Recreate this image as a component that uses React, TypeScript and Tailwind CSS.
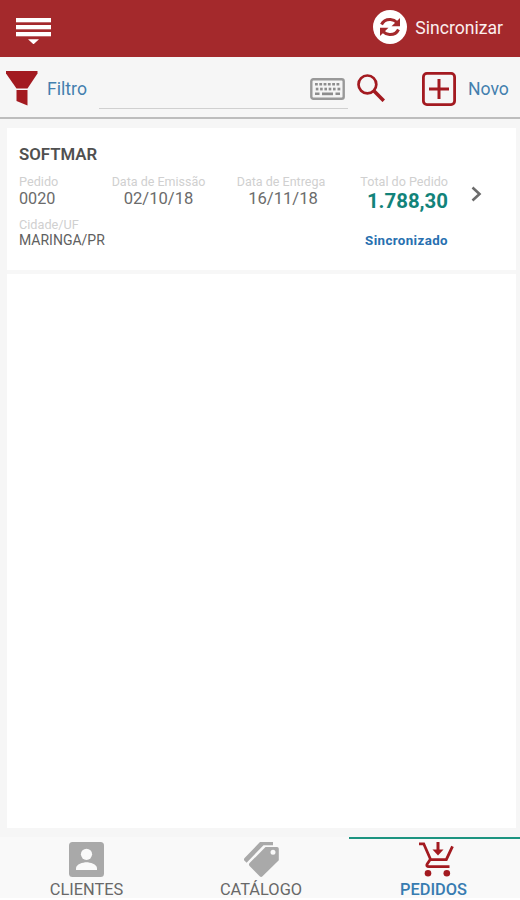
import React from 'react';

type Order = {
    id: string;
    customer: string;
    issueDate: string;
    deliveryDate: string;
    total: string;
    city: string;
    status: string;
};

const orders: Order[] = [
    {
        id: '0020',
        customer: 'SOFTMAR',
        issueDate: '02/10/18',
        deliveryDate: '16/11/18',
        total: '1.788,30',
        city: 'MARINGA/PR',
        status: 'Sincronizado',
    },
];

function MenuIcon() {
    return (
        <svg className="h-[28px] w-[36px] shrink-0" viewBox="0 0 36 28" fill="#fff">
            <rect x="1" y="2" width="35" height="4.300" />
            <rect x="1" y="9" width="35" height="4.300" />
            <rect x="1" y="16" width="35" height="4.300" />
            <path d="M13 23.300h11l-5.500 5z" />
        </svg>
    );
}

function SyncIcon() {
    return (
        <svg className="h-[34px] w-[34px] shrink-0" viewBox="0 0 34 34">
            <circle cx="17" cy="17" r="17" fill="#fff" />
            <g fill="none" stroke="#a4292c" strokeWidth="3">
                <path d="M8.500 14.500C10.300 10.700 13.500 9.200 17.500 9.400c3 .2 4.800 1.300 6.500 3.100" />
                <path d="M25.500 19.500C23.700 23.300 20.500 24.800 16.500 24.600c-3-.2-4.800-1.300-6.500-3.100" />
            </g>
            <path d="M27 8v8.300h-8.500z" fill="#a4292c" />
            <path d="M7 26v-8.300h8.500z" fill="#a4292c" />
        </svg>
    );
}

function FilterIcon() {
    return (
        <svg className="h-[35px] w-[32px] shrink-0" viewBox="0 0 32 35" fill="#a31a20">
            <path d="M0 0h31.500v2.500L21.500 17.500H10.500L0 2.500z" />
            <path d="M10.500 19h11v15.500l-11-4.500z" />
        </svg>
    );
}

function KeyboardIcon() {
    const keys = [5, 9.3, 13.6, 17.9, 22.2, 26.5];
    return (
        <svg className="h-[22px] w-[35px] shrink-0" viewBox="0 0 35 22">
            <rect x="1.300" y="1.300" width="32.400" height="19.400" rx="2" fill="#f5f5f5" stroke="#999" strokeWidth="2.400" />
            <g fill="#8d8d8d">
                {keys.map((x) => (
                    <rect key={x} x={x} y="5" width="2.800" height="2.500" />
                ))}
                {keys.slice(0, 5).map((x) => (
                    <rect key={x} x={x + 0.8} y="9.700" width="2.600" height="2.700" />
                ))}
                <rect x="27.500" y="9.700" width="2.800" height="2.700" />
                <rect x="5" y="14.500" width="4.500" height="2.500" />
                <rect x="12" y="14.500" width="11" height="2.700" />
                <rect x="25.500" y="14.500" width="4.500" height="2.500" />
            </g>
        </svg>
    );
}

function SearchIcon() {
    return (
        <svg className="h-[28px] w-[28px] shrink-0" viewBox="0 0 28 28" fill="none" stroke="#a31a20">
            <circle cx="10.400" cy="10.400" r="8.900" strokeWidth="2.700" />
            <path d="M16.800 16.800l10 10" strokeWidth="3.600" />
        </svg>
    );
}

function AddIcon() {
    return (
        <svg className="h-[34px] w-[34px] shrink-0" viewBox="0 0 34 34" fill="none" stroke="#a31a20">
            <rect x="1.400" y="1.400" width="31.200" height="31.200" rx="3.500" strokeWidth="2.800" />
            <path d="M17 7v20M7 17h20" strokeWidth="3" />
        </svg>
    );
}

function ClientsIcon() {
    return (
        <svg className="h-[35px] w-[35px] shrink-0" viewBox="0 0 35 35">
            <rect width="35" height="35" rx="3.500" fill="#a9a9a9" />
            <circle cx="17.500" cy="12.300" r="5.600" fill="#fafafa" />
            <path d="M7 28v-1.800c0-4 7-6 10.500-6S28 22.200 28 26.200V28z" fill="#fafafa" />
        </svg>
    );
}

function CatalogIcon() {
    return (
        <svg className="h-[35px] w-[35px] shrink-0" viewBox="0 0 35 35" fill="#a9a9a9">
            <path d="M16 0h13v3.200h-9.500L2.600 20.800 .6 18.800a2 2 0 0 1 0-2.800z" />
            <path
                fillRule="evenodd"
                d="M21.500 5H33a1.800 1.800 0 0 1 1.800 1.800v11.400L18.500 34.200a2 2 0 0 1-2.800 0L5.600 23.900a2 2 0 0 1 0-2.800zM29 7.800a2.500 2.500 0 1 0 0 5 2.500 2.500 0 1 0 0-5z"
            />
        </svg>
    );
}

function OrdersIcon() {
    return (
        <svg className="ml-[3px] h-[35px] w-[35px] shrink-0" viewBox="0 0 35 35">
            <g fill="none" stroke="#a31a20" strokeWidth="2.800">
                <path d="M0 1.800h4.700l7 15.900h15.600L33.500 4.400" />
                <path d="M11.200 17.500l-3 4.400c-1 1.600-.2 2.700 1.800 2.700h20.500" />
                <path d="M19 0v9" strokeWidth="3" />
            </g>
            <g fill="#a31a20">
                <path d="M13.500 7.500h11L19 13.500z" />
                <circle cx="9" cy="31.300" r="3.300" />
                <circle cx="27.800" cy="31.300" r="3.300" />
            </g>
        </svg>
    );
}

function OrderRow({ order }: { order: Order }) {
    return (
        <li className="flex h-[146px] border-b-4 border-[#f7f7f7] pl-[12px] pt-[16px]">
            <div className="w-[429px]">
                <h2 className="h-[31px] text-[16.8px] leading-[20px] font-semibold text-[#505050]">{order.customer}</h2>
                <div className="flex h-[43px] text-[16.6px] leading-[21px] whitespace-nowrap text-[#6b6b6b]">
                    <div className="w-[92px]">
                        <p className="text-[12.7px] leading-[13px] text-[#d0d0d0]">Pedido</p>
                        <p className="text-[16.2px]">{order.id}</p>
                    </div>
                    <div className="w-[95px] text-center">
                        <p className="text-[12.5px] leading-[13px] text-[#d0d0d0]">Data de Emissão</p>
                        <p>{order.issueDate}</p>
                    </div>
                    <div className="ml-[29px] w-[92px] text-center">
                        <p className="text-[12.5px] leading-[13px] text-[#d0d0d0]">Data de Entrega</p>
                        <p className="pl-[4px]">{order.deliveryDate}</p>
                    </div>
                    <div className="ml-auto w-[90px] text-right">
                        <p className="text-[12.6px] leading-[13px] text-[#d0d0d0]">Total do Pedido</p>
                        <p className="text-[20.4px] leading-[26px] font-bold text-[#12837a]">{order.total}</p>
                    </div>
                </div>
                <div className="flex items-end justify-between leading-[18px]">
                    <div>
                        <p className="text-[12.7px] leading-[13px] text-[#d0d0d0]">Cidade/UF</p>
                        <p className="text-[14px] text-[#606060]">{order.city}</p>
                    </div>
                    <p className="text-[13.3px] leading-[17px] font-bold tracking-[0.4px] text-[#2770b0]">{order.status}</p>
                </div>
            </div>
            <svg
                className="mt-[42px] ml-[23px] h-[16px] w-[12px]"
                viewBox="0 0 12 16"
                fill="none"
                stroke="#6c6c6c"
                strokeWidth="2.600"
            >
                <path d="M1.500 1.500L8.500 8l-7 6.500" />
            </svg>
        </li>
    );
}

function App() {
    return (
        <div className="flex h-[900px] w-[520px] flex-col bg-[#f6f6f6] font-[Roboto,sans-serif]">
            <header className="flex h-[57px] shrink-0 items-start justify-between bg-[#a4292c] pr-[17px] pl-[15px]">
                <button className="mt-[16px]">
                    <MenuIcon />
                </button>
                <button className="mt-[10px] flex items-center gap-[8px] text-[17.6px] text-[#fbeeee]">
                    <SyncIcon />
                    <span className="pt-[2px]">Sincronizar</span>
                </button>
            </header>

            <div className="flex h-[62px] shrink-0 border-b-2 border-[#bdbdbd] pt-[14px] pl-[6px]">
                <button className="flex h-[35px] items-center gap-[9px] text-[17.6px] text-[#437fae]">
                    <FilterIcon />
                    <span className="w-[40px] pt-[2px]">Filtro</span>
                </button>
                <div className="ml-[12px] flex h-[38px] w-[249px] items-start justify-end border-b border-[#d0d0d0] pt-[7px] pr-[3px]">
                    <KeyboardIcon />
                </div>
                <button className="mt-[3px] ml-[9px] h-[28px]">
                    <SearchIcon />
                </button>
                <button className="ml-[37px] flex h-[35px] items-center gap-[12px] text-[17.6px] text-[#437fae]">
                    <AddIcon />
                    <span className="pt-[2px]">Novo</span>
                </button>
            </div>

            <main className="mt-[9px] mr-[4px] ml-[7px] h-[700px] shrink-0 bg-white">
                <ul>
                    {orders.map((order) => (
                        <OrderRow key={order.id} order={order} />
                    ))}
                </ul>
            </main>

            <nav className="mt-[9px] flex h-[63px] shrink-0 items-start border-b-2 border-white bg-[#f9f9f9] text-[16.4px] leading-[20px] text-[#686868]">
                <button className="flex w-[173px] flex-col items-center pt-[5px]">
                    <ClientsIcon />
                    <span className="mt-[3px] h-[18px]">CLIENTES</span>
                </button>
                <button className="flex w-[176px] flex-col items-center pt-[5px]">
                    <CatalogIcon />
                    <span className="mt-[3px] h-[18px]">CATÁLOGO</span>
                </button>
                <button className="flex w-[171px] flex-col items-center border-t-2 border-[#1c9480] pt-[3px]">
                    <OrdersIcon />
                    <span className="mt-[3px] mr-[2px] h-[18px] font-medium text-[#377cb1]">PEDIDOS</span>
                </button>
            </nav>
        </div>
    );
}

export default App;
